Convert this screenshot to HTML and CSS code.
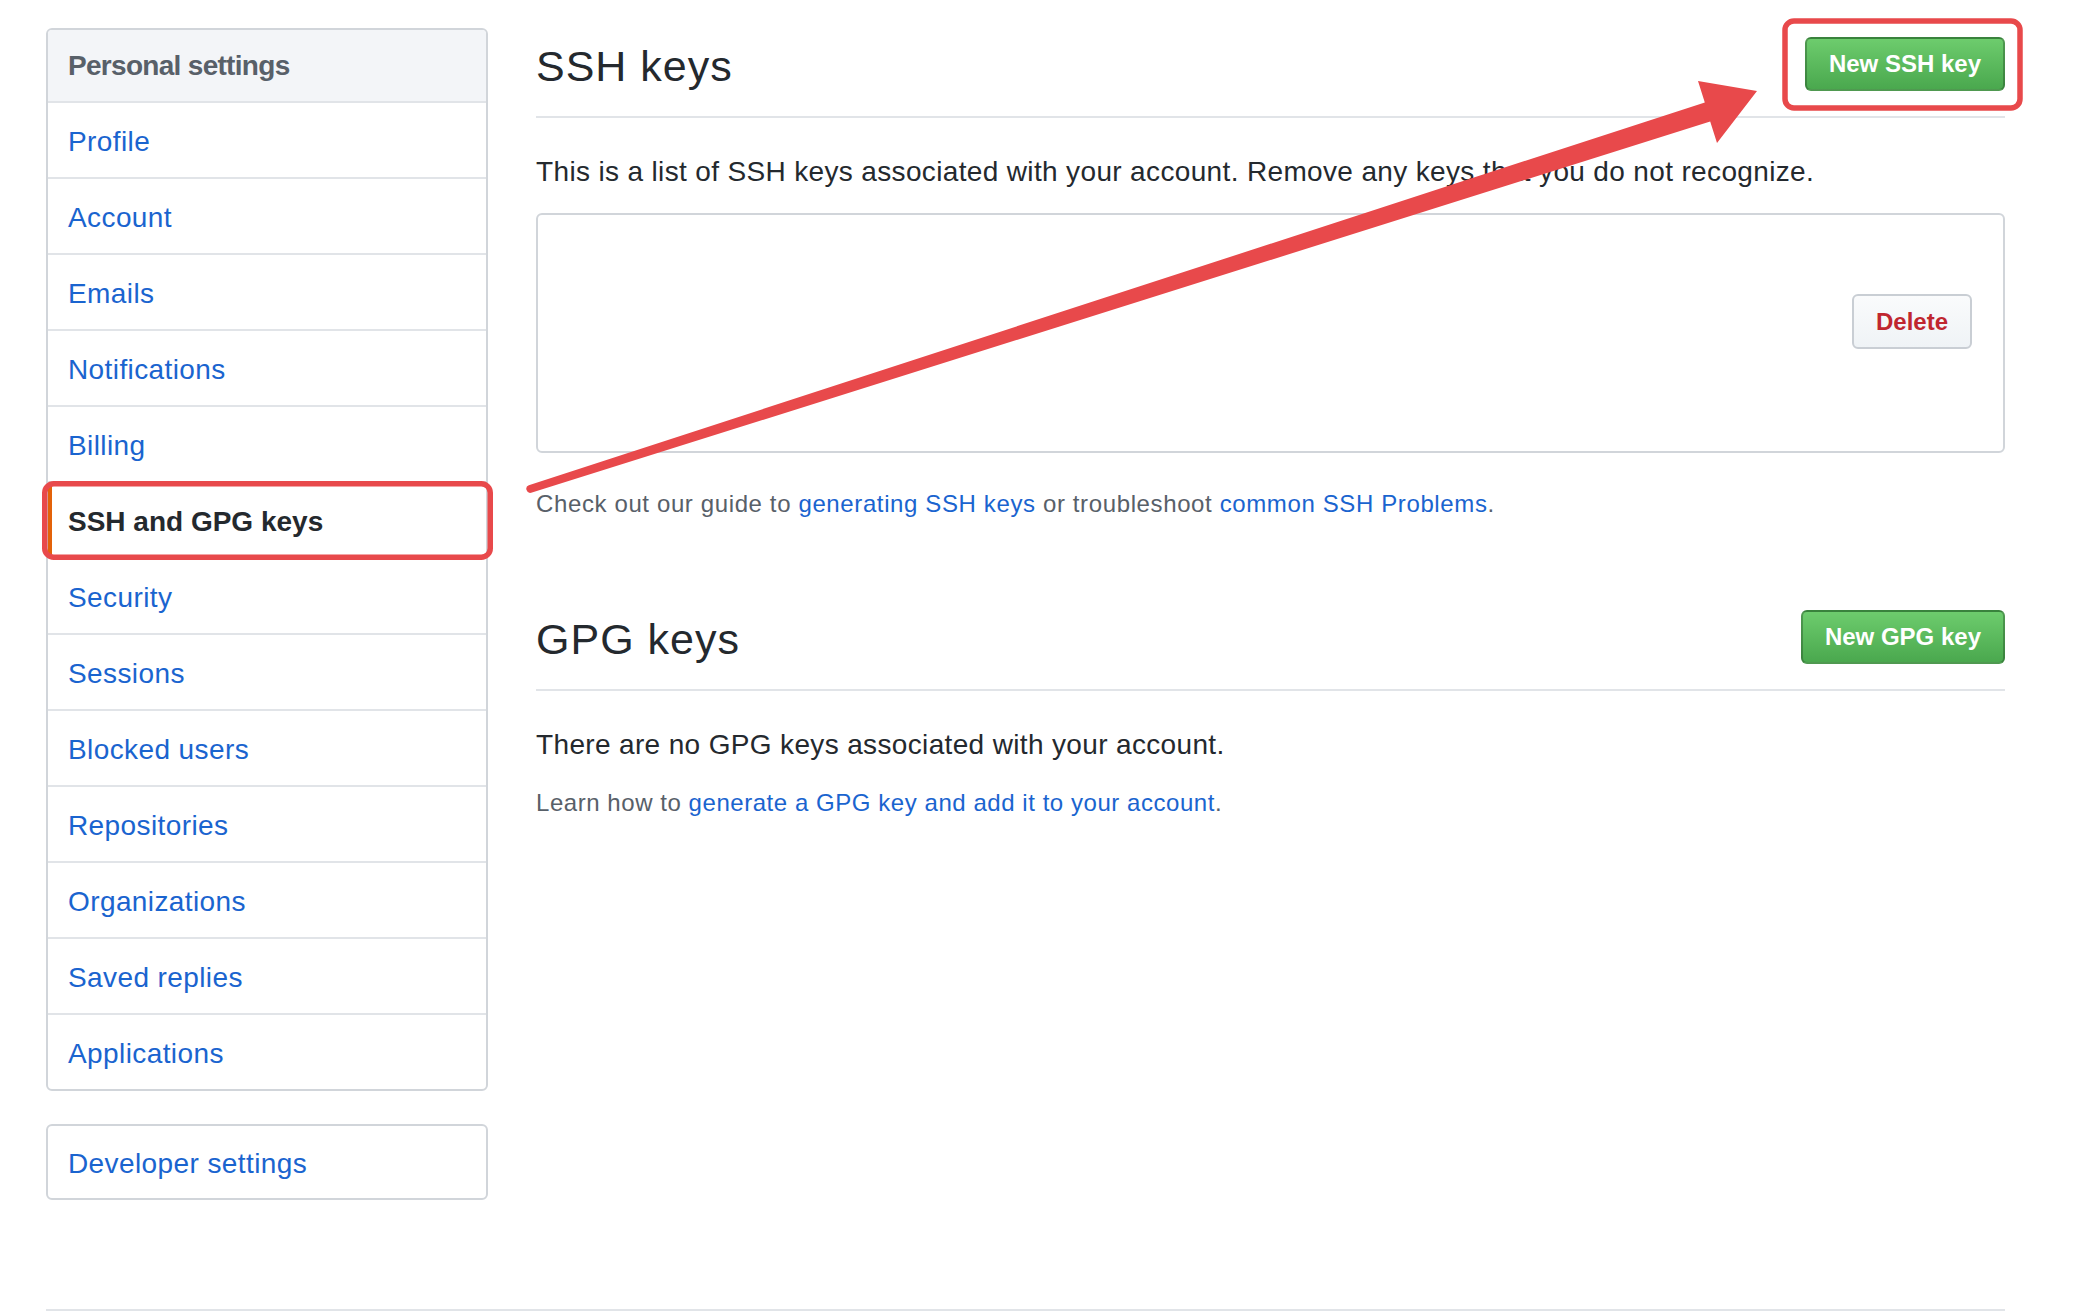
FILE: index.html
```html
<!DOCTYPE html>
<html lang="en">
<head>
<meta charset="utf-8">
<title>SSH and GPG keys</title>
<link rel="stylesheet" href="styles.css">
</head>
<body>
<div class="page">
  <nav class="sidebar">
    <div class="menu">
      <div class="menu-heading">Personal settings</div>
      <a class="menu-item" href="#">Profile</a>
      <a class="menu-item" href="#">Account</a>
      <a class="menu-item" href="#">Emails</a>
      <a class="menu-item" href="#">Notifications</a>
      <a class="menu-item" href="#">Billing</a>
      <a class="menu-item selected" href="#">SSH and GPG keys</a>
      <a class="menu-item" href="#">Security</a>
      <a class="menu-item" href="#">Sessions</a>
      <a class="menu-item" href="#">Blocked users</a>
      <a class="menu-item" href="#">Repositories</a>
      <a class="menu-item" href="#">Organizations</a>
      <a class="menu-item" href="#">Saved replies</a>
      <a class="menu-item" href="#">Applications</a>
    </div>
    <div class="menu menu-dev">
      <a class="menu-item" href="#">Developer settings</a>
    </div>
  </nav>
  <main class="content">
    <div class="subhead">
      <h2 class="subhead-heading">SSH keys</h2>
      <a class="btn btn-primary" href="#">New SSH key</a>
    </div>
    <p class="lead">This is a list of SSH keys associated with your account. Remove any keys that you do not recognize.</p>
    <div class="keybox">
      <button class="btn btn-danger" type="button">Delete</button>
    </div>
    <p class="note">Check out our guide to <a href="#">generating SSH keys</a> or troubleshoot <a href="#">common SSH Problems</a>.</p>

    <div class="subhead subhead-gpg">
      <h2 class="subhead-heading">GPG keys</h2>
      <a class="btn btn-primary" href="#">New GPG key</a>
    </div>
    <p class="lead">There are no GPG keys associated with your account.</p>
    <p class="note note-gpg">Learn how to <a href="#">generate a GPG key and add it to your account</a>.</p>
  </main>
</div>
<div class="footer"></div>

<svg class="annotations" width="2084" height="1312" viewBox="0 0 2084 1312" aria-hidden="true">
  <rect x="44.75" y="483.75" width="445.5" height="73.5" rx="9" ry="9" fill="none" stroke="#e8494b" stroke-width="5.5"/>
  <rect x="1785" y="21" width="235" height="87" rx="9" ry="9" fill="none" stroke="#e8494b" stroke-width="5.5"/>
  <path d="M528.8 485.2 L1704.8 102.4 L1698 81 L1757 91 L1717 143 L1710.2 121.6 L531.2 492.8 A4 4 0 0 1 528.8 485.2 Z" fill="#e8494b"/>
</svg>
</body>
</html>
```

FILE: styles.css
```css
html, body {
  margin: 0;
  padding: 0;
}

body {
  width: 2084px;
  height: 1312px;
  overflow: hidden;
  position: relative;
  background: #ffffff;
  color: #24292e;
  font-family: "Liberation Sans", Arial, sans-serif;
}

.page {
  display: flex;
  align-items: flex-start;
  gap: 48px;
  padding: 28px 0 0 46px;
}

/* Sidebar */
.sidebar {
  width: 442px;
  flex: none;
}

.menu {
  border: 2px solid #d1d5da;
  border-radius: 6px;
  background: #ffffff;
  overflow: hidden;
}

.menu-heading {
  padding: 15px 20px 14px;
  font-size: 28px;
  line-height: 42px;
  font-weight: bold;
  letter-spacing: -0.7px;
  color: #586069;
  background: #f3f5f8;
  border-bottom: 2px solid #e1e4e8;
}

.menu-item {
  display: block;
  padding: 18px 20px 14px;
  font-size: 28px;
  line-height: 42px;
  letter-spacing: 0.4px;
  color: #1a64cf;
  text-decoration: none;
  border-bottom: 2px solid #e1e4e8;
}

.menu-item:last-child {
  border-bottom: 0;
}

.menu-item.selected {
  color: #24292e;
  font-weight: bold;
  letter-spacing: 0;
  box-shadow: inset 4px 0 0 #e36209;
}

.menu-dev {
  margin-top: 33px;
}

.menu-dev .menu-item {
  padding: 17px 20px 13px;
}

/* Main content */
.content {
  width: 1469px;
  flex: none;
  padding-top: 9px;
}

.subhead {
  display: flex;
  justify-content: space-between;
  align-items: flex-start;
  padding-bottom: 20px;
  border-bottom: 2px solid #e1e4e8;
}

.subhead-heading {
  margin: 1px 0 0;
  height: 58px;
  font-size: 43px;
  line-height: 56px;
  letter-spacing: 1px;
  font-weight: normal;
  color: #24292e;
}

.subhead-gpg {
  margin-top: 88px;
}

.btn {
  display: inline-block;
  box-sizing: border-box;
  height: 54px;
  padding: 7px 22px;
  font-family: "Liberation Sans", Arial, sans-serif;
  font-size: 24px;
  line-height: 36px;
  font-weight: bold;
  text-decoration: none;
  border: 2px solid rgba(27, 31, 35, 0.2);
  border-radius: 6px;
  white-space: nowrap;
}

.btn-primary {
  color: #ffffff;
  background: linear-gradient(180deg, #6dcc6d 0%, #4aa84e 100%);
  border-color: rgba(27, 60, 30, 0.35);
}

.btn-danger {
  height: 55px;
  width: 120px;
  padding: 7px 0;
  color: #c0262f;
  background: linear-gradient(180deg, #fafbfc 0%, #eff3f6 100%);
  border-color: #c9ced4;
  cursor: pointer;
}

.lead {
  margin: 33px 0 0;
  font-size: 28px;
  line-height: 42px;
  letter-spacing: 0.35px;
  color: #24292e;
}

.keybox {
  box-sizing: border-box;
  height: 240px;
  margin-top: 20px;
  display: flex;
  justify-content: flex-end;
  align-items: flex-start;
  padding: 79px 31px 0 0;
  border: 2px solid #d1d5da;
  border-radius: 6px;
}

.note {
  margin: 33px 0 0;
  font-size: 24px;
  line-height: 36px;
  letter-spacing: 0.62px;
  color: #586069;
}

.note a {
  color: #1a64cf;
  text-decoration: none;
}

.note-gpg {
  margin-top: 19px;
  letter-spacing: 0.55px;
}

.footer {
  width: 1959px;
  margin: 109px 0 0 46px;
  border-top: 2px solid #e1e4e8;
}

/* Annotation overlay */
.annotations {
  position: absolute;
  left: 0;
  top: 0;
  pointer-events: none;
}
```
